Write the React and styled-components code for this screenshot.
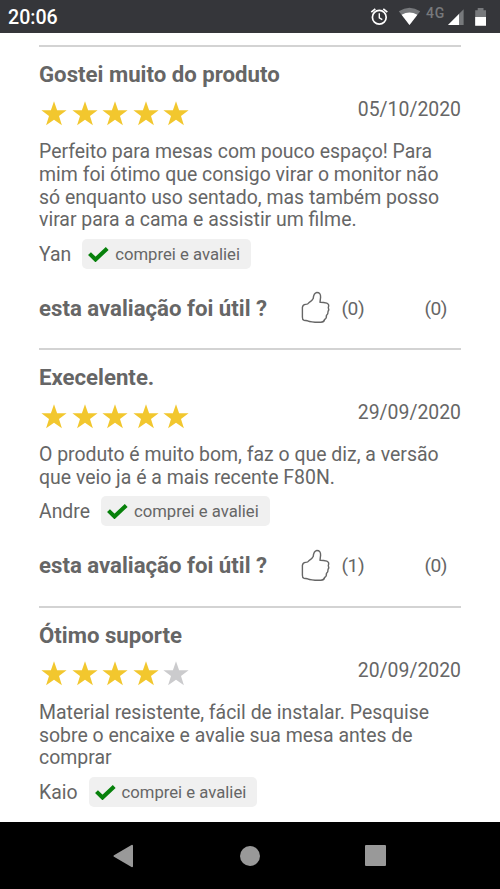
import React from 'react'
import styled, { createGlobalStyle } from 'styled-components'

const reviews = [
    {
        title: 'Gostei muito do produto',
        stars: 5,
        date: '05/10/2020',
        lines: [
            'Perfeito para mesas com pouco espaço! Para',
            'mim foi ótimo que consigo virar o monitor não',
            'só enquanto uso sentado, mas também posso',
            'virar para a cama e assistir um filme.',
        ],
        author: 'Yan',
        votes: { likes: 0, dislikes: 0 },
    },
    {
        title: 'Execelente.',
        stars: 5,
        date: '29/09/2020',
        lines: [
            'O produto é muito bom, faz o que diz, a versão',
            'que veio ja é a mais recente F80N.',
        ],
        author: 'Andre',
        votes: { likes: 1, dislikes: 0 },
    },
    {
        title: 'Ótimo suporte',
        stars: 4,
        date: '20/09/2020',
        lines: [
            'Material resistente, fácil de instalar. Pesquise',
            'sobre o encaixe e avalie sua mesa antes de',
            'comprar',
        ],
        author: 'Kaio',
    },
]

const StatusIcons = () => (
    <svg width="118" height="33" viewBox="0 0 118 33">
        <g fill="none" stroke="#fff" strokeWidth="1.7">
            <circle cx="9.3" cy="17.3" r="6.9" />
            <path d="M9.3 13.2v4.6l3 1.8" strokeWidth="1.4" />
            <path d="M1.3 12.2l4-3.4M17.3 12.2l-4-3.4" />
        </g>
        <path d="M28.8 11.3Q39.5 4 50.2 11.3L39.5 25Z" fill="#77797c" />
        <path d="M31.6 14.8Q39.5 10.4 47.4 14.8L39.5 25Z" fill="#fff" />
        <path d="M93.6 9.3V25H78Z" fill="#77797c" />
        <path d="M89 13.9V25H78Z" fill="#fff" />
        <path d="M107.7 8h5.8v2.2h2.5V25.7h-10.8V10.2h2.5Z" fill="#77797c" />
        <path d="M105.2 17H116v8.7h-10.8Z" fill="#fff" />
    </svg>
)

const Star = ({ filled }) => (
    <svg width="26" height="25" viewBox="0 0 26 25">
        <path
            d="M13 .3l3.1 9h9.5l-7.6 5.8 2.9 9.1-7.9-5.5-7.9 5.5L8 15.1.4 9.3h9.5Z"
            fill={filled ? '#f2c72e' : '#cbcbcd'}
        />
    </svg>
)

const Check = () => (
    <svg width="21" height="16" viewBox="0 0 21 16">
        <path d="M1.5 7.6l6 5.9L19.2 2.4" fill="none" stroke="#07810b" strokeWidth="4.1" />
    </svg>
)

const Thumb = () => (
    <svg width="30" height="33" viewBox="0 0 30 33">
        <path
            d="M1.4 16.4Q1.8 13.6 4.5 13.4Q6.7 13.6 8 11.6Q11.5 9.5 12.2 7.6Q12.7 2.1 15.8 1.5Q19.8 1.4 19.6 6.2L19 11.3Q22.3 11.2 25.8 12.2Q28.6 13.4 27.3 16.6Q28.3 18.5 27 20.6Q27.3 22.7 25.4 24.4Q25.7 27.5 23.6 28.5Q23 31.4 19.5 31.2Q10.5 31.4 6.5 29.8L2.8 29.2Q1.3 28.7 1.4 26Z"
            fill="none"
            stroke="#666"
            strokeWidth="1.4"
            strokeLinejoin="round"
        />
    </svg>
)

const Review = ({ review }) => {
    const { title, stars, date, lines, author, votes } = review

    return (
        <Card>
            <Title>{title}</Title>
            <RatingRow>
                <Stars>
                    {[1, 2, 3, 4, 5].map(n => <Star key={n} filled={n <= stars} />)}
                </Stars>
                <ReviewDate>{date}</ReviewDate>
            </RatingRow>
            <Comment>
                {lines.map(line => <Line key={line}>{line}</Line>)}
            </Comment>
            <AuthorRow>
                <Author>{author}</Author>
                <Badge>
                    <Check />
                    <BadgeText>comprei e avaliei</BadgeText>
                </Badge>
            </AuthorRow>
            {votes && (
                <UsefulRow>
                    <Question>esta avaliação foi útil ?</Question>
                    <Thumb />
                    <Count>({votes.likes})</Count>
                    <Count $last>({votes.dislikes})</Count>
                </UsefulRow>
            )}
        </Card>
    )
}

const App = () => (
    <Screen>
        <GlobalStyle />
        <StatusBar>
            <Clock>20:06</Clock>
            <Status>
                <StatusIcons />
                <Network>4G</Network>
            </Status>
        </StatusBar>
        <Content>
            {reviews.map(review => <Review key={review.title} review={review} />)}
        </Content>
        <NavBar>
            <svg width="21" height="24" viewBox="0 0 21 24">
                <path d="M1.5 12L19 1.8V22.2Z" fill="#999" stroke="#999" strokeWidth="2" strokeLinejoin="round" />
            </svg>
            <NavHome />
            <NavRecent />
        </NavBar>
    </Screen>
)

export default App

const GlobalStyle = createGlobalStyle`
    body {
        margin: 0;
        background: #fff;
    }

    * {
        box-sizing: border-box;
    }

    svg {
        display: block;
        flex: none;
    }
`

const Screen = styled.div`
    width: 500px;
    height: 889px;
    display: flex;
    flex-direction: column;
    overflow: hidden;
    font-family: Roboto, sans-serif;
    color: #666;
`

const StatusBar = styled.header`
    height: 33px;
    flex: none;
    display: flex;
    align-items: center;
    justify-content: space-between;
    padding: 0 12px 0 8px;
    background: #35363a;
`

const Clock = styled.time`
    color: #fff;
    font-size: 19.6px;
    font-weight: 500;
    line-height: 33px;
    padding-top: 2px;
`

const Status = styled.div`
    position: relative;
`

const Network = styled.span`
    position: absolute;
    left: 56px;
    top: 5px;
    color: #77797c;
    font-size: 14px;
    font-weight: 500;
    letter-spacing: 0.8px;
    line-height: 17px;
`

const Content = styled.main`
    flex: 1;
    min-height: 0;
    overflow: hidden;
    padding: 12.2px 39px 0;
`

const Card = styled.article`
    border-top: 2px solid #d3d3d3;
`

const Title = styled.h2`
    margin: 0;
    padding-top: 12.8px;
    font-size: 22.2px;
    font-weight: 700;
    line-height: 28px;
`

const RatingRow = styled.div`
    display: flex;
    justify-content: space-between;
    height: 53px;
    padding-top: 11.2px;
`

const Stars = styled.div`
    display: flex;
    gap: 4.6px;
    padding: 1.4px 0 0 2px;
`

const ReviewDate = styled.time`
    font-size: 19.4px;
    line-height: 22.8px;
`

const Comment = styled.div`
    font-size: 19.45px;
    line-height: 22.8px;
`

const Line = styled.p`
    margin: 0;
    white-space: nowrap;
`

const AuthorRow = styled.div`
    display: flex;
    align-items: center;
    gap: 11px;
    margin-top: 6.2px;
    height: 30.5px;
`

const Author = styled.span`
    padding-top: 1px;
    font-size: 19.4px;
`

const Badge = styled.span`
    display: flex;
    align-items: center;
    height: 30px;
    padding: 0 11px 0 6px;
    border-radius: 5px;
    background: #f0f0f0;
`

const BadgeText = styled.span`
    margin-left: 6px;
    padding-top: 1px;
    font-size: 16.7px;
`

const UsefulRow = styled.div`
    display: flex;
    align-items: center;
    height: 34px;
    margin: 21.7px 0 23.8px;
`

const Question = styled.strong`
    width: 262px;
    font-size: 22.2px;
    font-weight: 700;
`

const Count = styled.span`
    margin-left: ${props => (props.$last ? 'auto' : '10.5px')};
    margin-right: ${props => (props.$last ? '14px' : '0')};
    padding-top: 1px;
    font-size: 19.2px;
    letter-spacing: -0.5px;
`

const NavBar = styled.nav`
    height: 67px;
    flex: none;
    display: flex;
    align-items: center;
    justify-content: space-between;
    padding: 0 114px 0 113px;
    background: #000;
`

const NavHome = styled.span`
    width: 20px;
    height: 20px;
    border-radius: 50%;
    background: #999;
`

const NavRecent = styled.span`
    width: 21px;
    height: 21px;
    border-radius: 1px;
    background: #999;
`
